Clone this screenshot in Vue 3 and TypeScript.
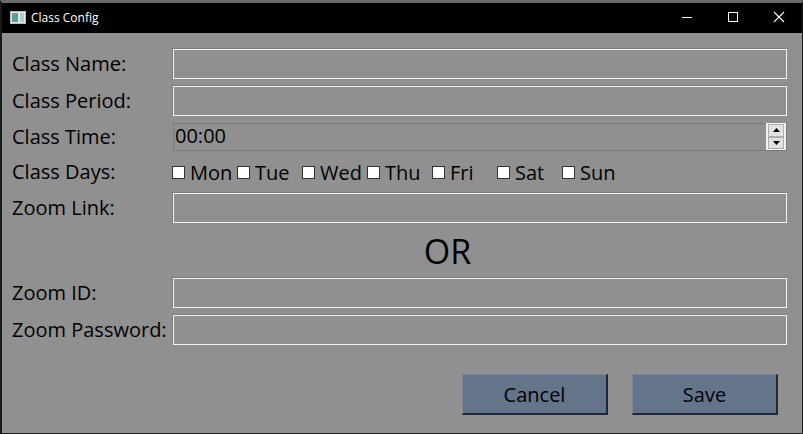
<script setup lang="ts">
const days: string[] = ['Mon', 'Tue', 'Wed', 'Thu', 'Fri', 'Sat', 'Sun']
</script>

<template>
  <div class="window">
    <header class="titlebar">
      <svg class="appicon" width="16" height="13" viewBox="0 0 16 13">
        <rect x="0.5" y="0.5" width="15" height="12" fill="#dfe8e8" stroke="#b4bebe" />
        <rect x="2" y="2" width="6" height="9" fill="#5a9ca0" />
        <rect x="10" y="2" width="4" height="9" fill="#bcc8ca" />
      </svg>
      <span class="title">Class Config</span>
      <div class="controls">
        <svg class="ctl" width="46" height="30" viewBox="0 0 46 30"><path d="M18 14.5H28" stroke="#fff" stroke-width="1" /></svg>
        <svg class="ctl" width="46" height="30" viewBox="0 0 46 30"><rect x="18.5" y="9.5" width="9" height="9" fill="none" stroke="#fff" /></svg>
        <svg class="ctl" width="46" height="30" viewBox="0 0 46 30"><path d="M18 9L28 19M28 9L18 19" stroke="#fff" stroke-width="1.1" /></svg>
      </div>
    </header>
    <main class="form">
      <div class="row">
        <label class="label">Class Name:</label>
        <div class="input"></div>
      </div>
      <div class="row">
        <label class="label">Class Period:</label>
        <div class="input"></div>
      </div>
      <div class="row time-row">
        <label class="label">Class Time:</label>
        <div class="time">
          <span class="time-value">00:00</span>
          <div class="spin">
            <div class="spin-btn"><svg width="7" height="4" viewBox="0 0 7 4"><path d="M3.5 0L7 4H0Z" fill="#000" /></svg></div>
            <div class="spin-btn"><svg width="7" height="4" viewBox="0 0 7 4"><path d="M0 0H7L3.5 4Z" fill="#000" /></svg></div>
          </div>
        </div>
      </div>
      <div class="row days-row">
        <label class="label">Class Days:</label>
        <div class="days">
          <div v-for="d in days" :key="d" class="day">
            <span class="check"></span>
            <span class="day-name">{{ d }}</span>
          </div>
        </div>
      </div>
      <div class="row">
        <label class="label">Zoom Link:</label>
        <div class="input"></div>
      </div>
      <div class="or">OR</div>
      <div class="row">
        <label class="label">Zoom ID:</label>
        <div class="input"></div>
      </div>
      <div class="row">
        <label class="label">Zoom Password:</label>
        <div class="input"></div>
      </div>
      <div class="actions">
        <button class="btn">Cancel</button>
        <button class="btn">Save</button>
      </div>
    </main>
  </div>
</template>

<style>
html, body { margin: 0; padding: 0; background: #909090; }
</style>

<style scoped>
.window {
  width: 803px;
  height: 434px;
  box-sizing: border-box;
  display: flex;
  flex-direction: column;
  background: #909090;
  border-left: 2px solid #1a1a1a;
  border-right: 1px solid #1a1a1a;
  border-bottom: 1px solid #1a1a1a;
  border-top: 3px solid #6a6a6a;
  font-family: "Open Sans", "Noto Sans", sans-serif;
  color: #000;
  overflow: hidden;
}
.titlebar {
  height: 30px;
  flex: none;
  box-sizing: border-box;
  background: #000;
  display: flex;
  align-items: center;
  padding-left: 8px;
  color: #fff;
}
.appicon { flex: none; margin-bottom: 2px; }
.title { font-size: 12px; margin-left: 5px; margin-bottom: 1px; }
.controls { margin-left: auto; display: flex; }
.ctl { display: block; }
.form {
  flex: 1;
  display: flex;
  flex-direction: column;
  padding: 16px 15px 0 10px;
}
.row {
  display: flex;
  align-items: center;
  height: 30px;
  margin-bottom: 7px;
}
.label {
  width: 161px;
  flex: none;
  font-size: 20px;
  line-height: 30px;
  white-space: nowrap;
}
.input {
  flex: 1;
  height: 30px;
  box-sizing: border-box;
  border: 1px solid #f2f2f2;
  box-shadow: -1px -1px 0 #7a7a7a;
}
.time-row { height: 29px; align-items: flex-start; }
.time-row .label { line-height: 28px; }
.time {
  flex: 1;
  height: 28px;
  box-sizing: border-box;
  border: 1px solid #7a7a7a;
  display: flex;
  align-items: center;
  justify-content: space-between;
  padding: 0 0 2px 1px;
}
.time-value { font-size: 20px; line-height: 26px; }
.spin {
  width: 20px;
  height: 27px;
  margin-top: 1px;
  flex: none;
  box-sizing: border-box;
  background: #f2f2f2;
  padding: 1px 2px;
  display: flex;
  flex-direction: column;
}
.spin-btn {
  flex: 1;
  background: #e1e1e1;
  border: 1px solid #adadad;
  display: flex;
  align-items: center;
  justify-content: center;
}
.days-row { height: 26px; margin-bottom: 8px; }
.days { display: flex; margin-left: -1px; }
.day { display: flex; align-items: center; width: 65px; }
.check {
  width: 13px;
  height: 13px;
  box-sizing: border-box;
  background: #fff;
  border: 1px solid #333;
  margin-right: 5px;
}
.day-name { font-size: 20px; }
.or {
  height: 48px;
  box-sizing: border-box;
  padding-left: 96px;
  text-align: center;
  font-size: 34px;
  line-height: 42px;
}
.actions {
  display: flex;
  justify-content: flex-end;
  gap: 24px;
  margin-top: 22px;
  padding-right: 9px;
}
.btn {
  width: 146px;
  height: 41px;
  box-sizing: border-box;
  background: #64748b;
  border: none;
  border-right: 2px solid #23282f;
  border-bottom: 2px solid #23282f;
  border-top: 1px solid #77869b;
  border-left: 1px solid #77869b;
  font: inherit;
  font-size: 20px;
  color: #000;
  padding: 0;
}
</style>
